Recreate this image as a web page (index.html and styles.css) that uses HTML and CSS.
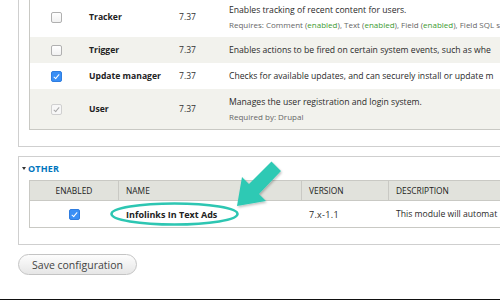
FILE: index.html
```html
<!DOCTYPE html>
<html>
<head>
<meta charset="utf-8">
<link rel="stylesheet" href="styles.css">
</head>
<body>
<div class="page">
  <div class="fieldset fs-top">
    <div class="mod-table">
      <div class="mrow tall">
        <div class="c-check"><span class="cb"></span></div>
        <div class="c-name">Tracker</div>
        <div class="c-ver">7.37</div>
        <div class="c-desc">
          <div class="d-line">Enables tracking of recent content for users.</div>
          <div class="req">Requires: Comment (<span class="ok">enabled</span>), Text (<span class="ok">enabled</span>), Field (<span class="ok">enabled</span>), Field SQL s</div>
        </div>
      </div>
      <div class="mrow odd">
        <div class="c-check"><span class="cb"></span></div>
        <div class="c-name">Trigger</div>
        <div class="c-ver">7.37</div>
        <div class="c-desc"><div class="d-line">Enables actions to be fired on certain system events, such as whe</div></div>
      </div>
      <div class="mrow">
        <div class="c-check"><span class="cb checked"></span></div>
        <div class="c-name">Update manager</div>
        <div class="c-ver">7.37</div>
        <div class="c-desc"><div class="d-line">Checks for available updates, and can securely install or update m</div></div>
      </div>
      <div class="mrow odd tall last">
        <div class="c-check"><span class="cb disabled"></span></div>
        <div class="c-name">User</div>
        <div class="c-ver">7.37</div>
        <div class="c-desc">
          <div class="d-line">Manages the user registration and login system.</div>
          <div class="req">Required by: Drupal</div>
        </div>
      </div>
    </div>
  </div>

  <div class="fieldset fs-other">
    <div class="legend"><span class="tri"></span>OTHER</div>
    <div class="other-table">
      <div class="orow head">
        <div class="o-en">ENABLED</div>
        <div class="o-name">NAME</div>
        <div class="o-ver">VERSION</div>
        <div class="o-desc">DESCRIPTION</div>
      </div>
      <div class="orow body">
        <div class="o-en"><span class="cb checked"></span></div>
        <div class="o-name strong">Infolinks In Text Ads</div>
        <div class="o-ver">7.x-1.1</div>
        <div class="o-desc">This module will automat</div>
      </div>
    </div>
  </div>

  <button class="save">Save configuration</button>
</div>
<div class="frame-bar"></div>

<svg class="annot" width="500" height="300" viewBox="0 0 500 300">
  <defs>
    <filter id="sh" x="-20%" y="-20%" width="140%" height="140%">
      <feDropShadow dx="1" dy="1.5" stdDeviation="1.2" flood-color="#000" flood-opacity="0.25"/>
    </filter>
  </defs>
  <ellipse cx="174.5" cy="214" rx="63" ry="10.5" fill="none" stroke="#2dc6b2" stroke-width="2.6"/>
  <polygon filter="url(#sh)" fill="#2dc9b4" points="237,206 266,201 259,194 281,171 271.5,161.5 249,184 242,177"/>
</svg>
</body>
</html>
```

FILE: styles.css
```css
html, body {
  margin: 0;
  padding: 0;
}
body {
  width: 500px;
  height: 300px;
  overflow: hidden;
  position: relative;
  background: #fff;
  font-family: "Open Sans", "Noto Sans", sans-serif;
  font-size: 8px;
  color: #333;
}
.page {
  padding-left: 18px;
}
.fieldset {
  border: 1px solid #cfcfcf;
  width: 620px;
  box-sizing: border-box;
  padding: 0 0 16px 10px;
}
.fs-top {
  border-top: none;
  margin-top: -3px;
}
.mod-table {
  border: 1px solid #c9c9c4;
  border-top: none;
}
.mrow {
  display: grid;
  grid-template-columns: 59px 90px 50px 1fr;
  align-items: center;
  height: 26px;
  background: #fff;
}
.mrow.tall {
  height: 40px;
}
.mrow.odd {
  background: #f2f2ed;
}
.c-check {
  padding-left: 21px;
  display: flex;
  align-items: center;
}
.c-name {
  font-weight: 700;
  font-size: 8.6px;
  color: #222;
}
.c-ver {
  font-size: 8.6px;
  color: #333;
}
.c-desc {
  white-space: nowrap;
  color: #2a2a2a;
}
.d-line {
  line-height: 15px;
  font-size: 8.65px;
}
.req {
  font-size: 8px;
  line-height: 13px;
  color: #666;
}
.ok {
  color: #3d9a2f;
}
.cb {
  display: block;
  width: 9px;
  height: 9px;
  border: 1px solid #b0b0b0;
  border-radius: 2px;
  background: linear-gradient(#ffffff, #f1f1f1);
  box-sizing: content-box;
  position: relative;
}
.cb.checked {
  background: #3a8ff5;
  border-color: #2f7de0;
}
.cb.checked::after,
.cb.disabled::after {
  content: "";
  position: absolute;
  left: 3px;
  top: 1px;
  width: 2px;
  height: 5px;
  border: solid #fff;
  border-width: 0 1.5px 1.5px 0;
  transform: rotate(40deg);
}
.cb.disabled {
  border-color: #d0d0d0;
  background: #f7f7f7;
}
.cb.disabled::after {
  border-color: #a9a9a9;
  border-width: 0 1px 1px 0;
}

.fs-other {
  margin-top: 9px;
}
.legend {
  display: flex;
  align-items: center;
  height: 12px;
  margin-top: 5px;
  margin-left: -7px;
  margin-bottom: 6px;
  font-weight: 700;
  font-size: 9px;
  color: #0074bd;
  letter-spacing: 0.2px;
}
.tri {
  width: 0;
  height: 0;
  border-left: 2.5px solid transparent;
  border-right: 2.5px solid transparent;
  border-top: 3px solid #333;
  margin-right: 2px;
}
.other-table {
  border: 1px solid #c9c9c4;
}
.orow {
  display: grid;
  grid-template-columns: 89px 183px 87px 1fr;
}
.orow.head {
  background: #e1e2dc;
  height: 19px;
  border-bottom: 1px solid #c9c9c4;
  font-size: 8.4px;
  color: #222;
  text-transform: uppercase;
}
.orow.head > div {
  display: flex;
  align-items: center;
  padding-left: 7px;
  border-right: 1px solid #c9c9c4;
}
.orow.head > .o-en {
  justify-content: center;
  padding-left: 0;
}
.orow.head > .o-desc {
  border-right: none;
}
.orow.body {
  height: 26px;
  background: #fff;
  font-size: 8.65px;
  color: #2a2a2a;
}
.orow.body > div {
  display: flex;
  align-items: center;
  padding-left: 7px;
  white-space: nowrap;
}
.orow.body > .o-en {
  justify-content: center;
  padding-left: 0;
}
.orow.body > .o-en .cb {
  margin-right: 1px;
}
.orow.body > .o-ver {
  font-size: 9px;
  letter-spacing: 0.3px;
}
.strong {
  font-weight: 700;
  color: #222;
  font-size: 9px;
}
.save {
  display: block;
  margin-top: 9px;
  width: 119px;
  height: 21px;
  border: 1px solid #c4c4c4;
  border-radius: 11px;
  background: linear-gradient(#fdfdfd, #e6e6e6);
  font-family: "Open Sans", "Noto Sans", sans-serif;
  font-size: 10.5px;
  color: #444;
  padding: 0;
}
.frame-bar {
  margin-top: 24px;
  height: 2px;
  background: #111;
}
.annot {
  position: absolute;
  left: 0;
  top: 0;
  pointer-events: none;
}
```
